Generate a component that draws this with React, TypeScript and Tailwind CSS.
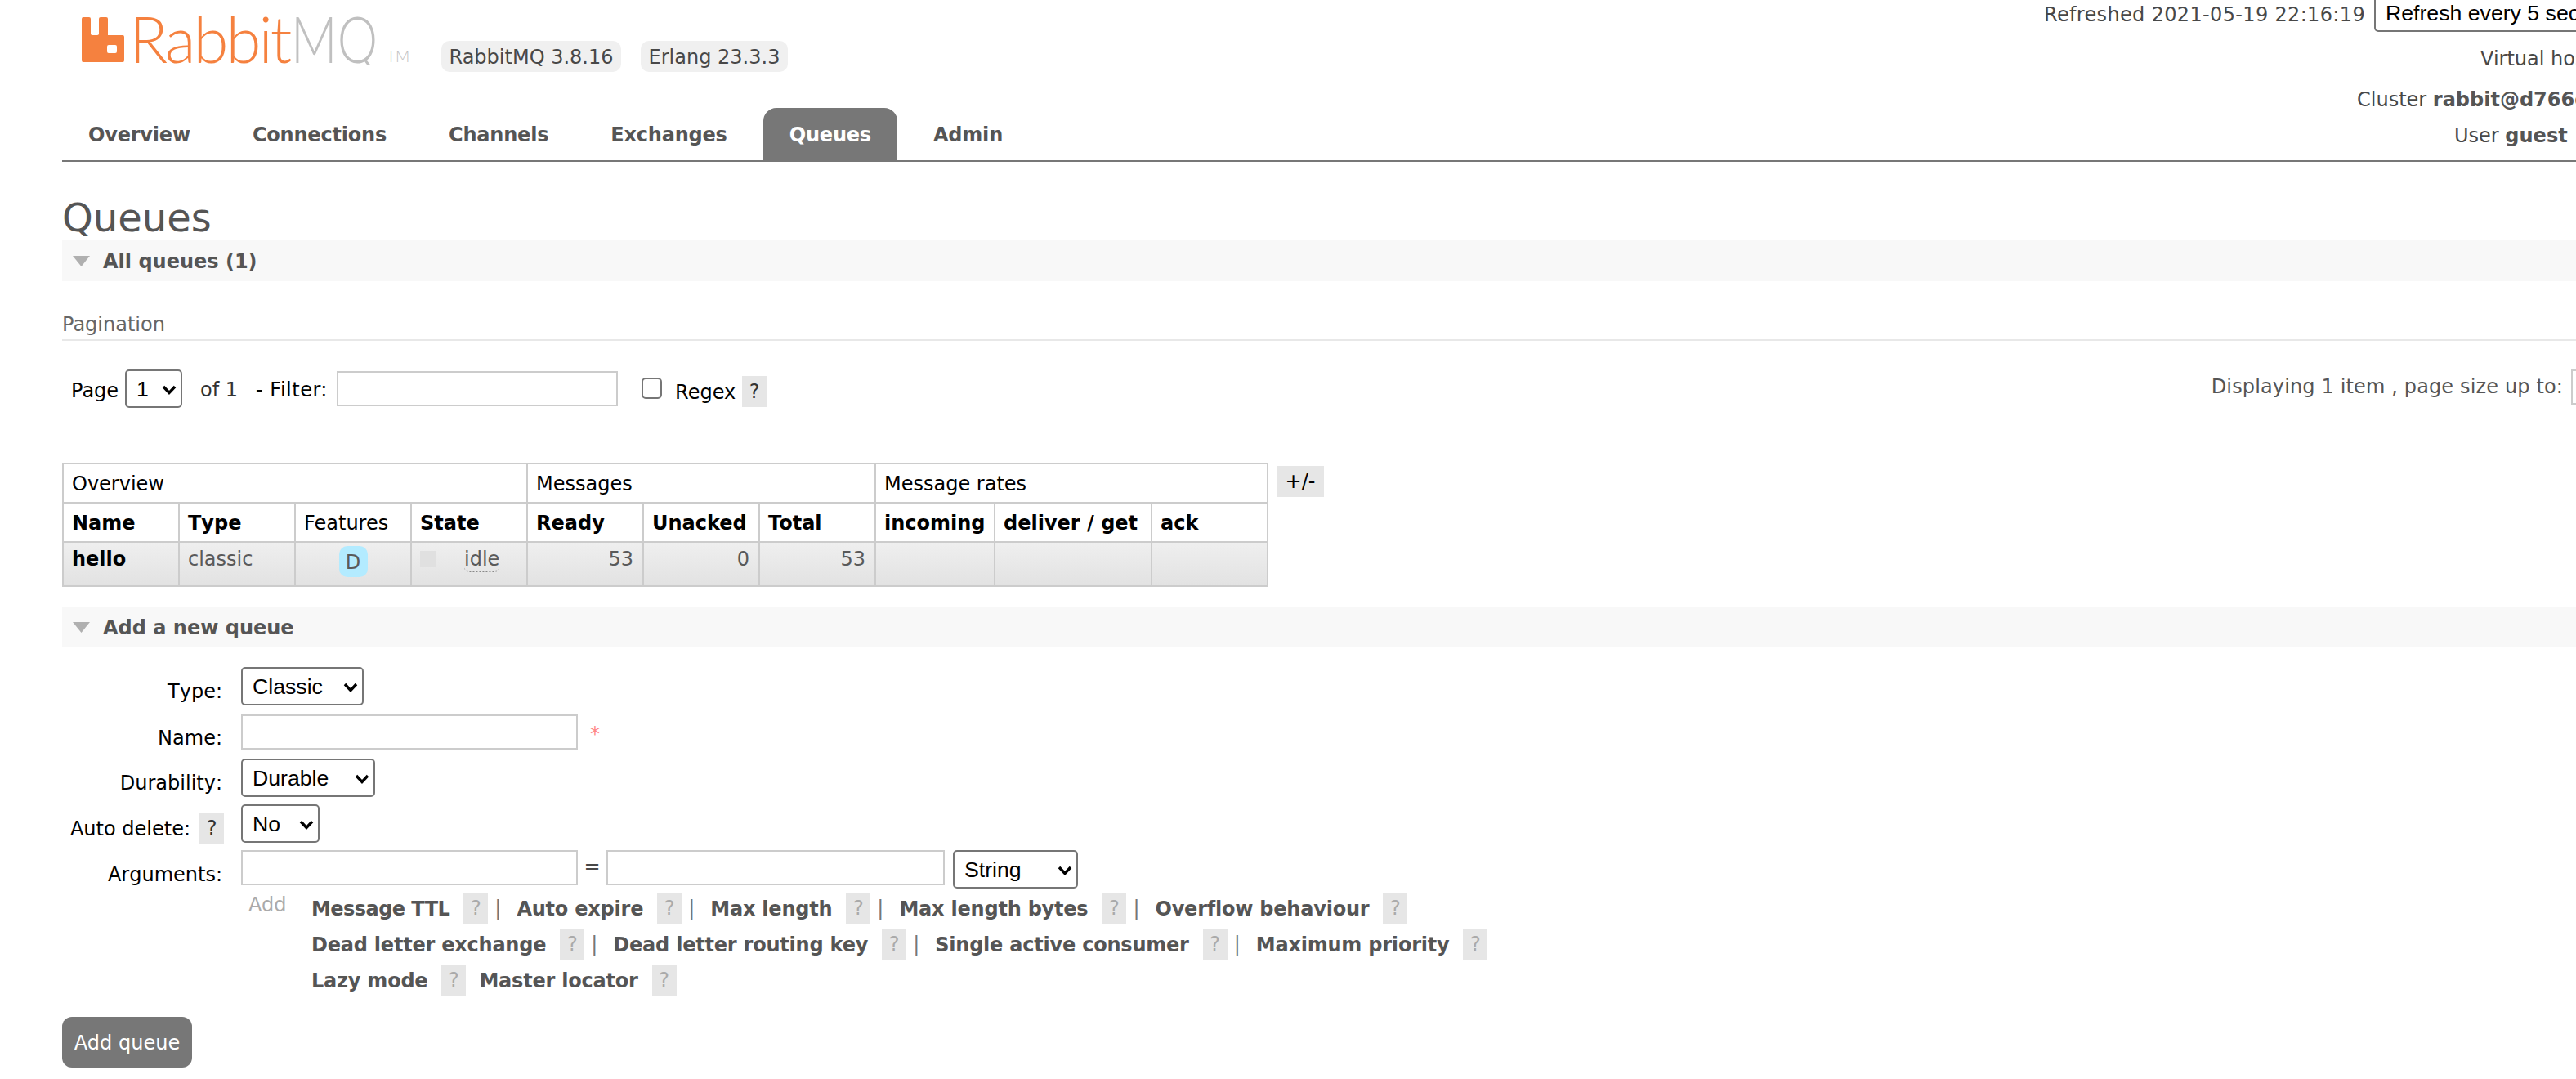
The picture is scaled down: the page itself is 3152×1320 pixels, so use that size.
import type { ReactNode } from "react";

const tabs = ["Overview", "Connections", "Channels", "Exchanges", "Queues", "Admin"];

const colWidths = [142, 142, 142, 142, 142, 142, 142, 146, 192, 142];

const argLines: { label: string; sep: boolean }[][] = [
  [
    { label: "Message TTL", sep: true },
    { label: "Auto expire", sep: true },
    { label: "Max length", sep: true },
    { label: "Max length bytes", sep: true },
    { label: "Overflow behaviour", sep: false },
  ],
  [
    { label: "Dead letter exchange", sep: true },
    { label: "Dead letter routing key", sep: true },
    { label: "Single active consumer", sep: true },
    { label: "Maximum priority", sep: false },
  ],
  [
    { label: "Lazy mode", sep: false },
    { label: "Master locator", sep: false },
  ],
];

function Select({ value, width, className = "" }: { value: string; width: number; className?: string }) {
  return (
    <div className={`relative shrink-0 ${className}`} style={{ width }}>
      <select
        defaultValue={value}
        className="h-[47px] w-full appearance-none rounded-[5px] border-2 border-[#767676] bg-white pt-[1px] pl-[12px] font-['Liberation_Sans',sans-serif] text-[26.67px] text-black"
      >
        <option>{value}</option>
      </select>
      <svg viewBox="0 0 18 12" className="pointer-events-none absolute top-[19px] right-[7px] h-[12px] w-[18px]">
        <polyline points="2,2 9,9.5 16,2" fill="none" stroke="#000" strokeWidth="3.4" />
      </svg>
    </div>
  );
}

function Help({ faint, className = "" }: { faint?: boolean; className?: string }) {
  return (
    <span
      className={`flex h-[38px] w-[30px] shrink-0 items-center justify-center bg-[#e6e6e6] ${
        faint ? "text-[#aaa]" : "text-[#333]"
      } ${className}`}
    >
      ?
    </span>
  );
}

function SectionBar({ children }: { children: ReactNode }) {
  return (
    <div className="flex h-[50px] items-center bg-[#f8f8f8] font-bold text-[#555]">
      <svg viewBox="0 0 21 13" className="ml-[13px] h-[13px] w-[21px]">
        <polygon points="0,0 21,0 10.5,13" fill="#b0b0b0" />
      </svg>
      <span className="ml-[16px] pt-[2px]">{children}</span>
    </div>
  );
}

function FormRow({ label, top = 16, help, className = "", children }: { label: string; top?: number; help?: boolean; className?: string; children: ReactNode }) {
  return (
    <div className={`flex items-start ${className}`}>
      <div className="flex w-[196px] shrink-0 items-start justify-end text-black">
        <span className="[font-kerning:none]" style={{ marginTop: top }}>{label}</span>
        {help && <Help className="mt-[10px] -mr-[2px] ml-[11px]" />}
      </div>
      <div className="ml-[23px] flex items-start">{children}</div>
    </div>
  );
}

function TextInput({ width }: { width: number }) {
  return <input className="h-[43px] shrink-0 border-2 border-[#ccc] bg-white" style={{ width }} />;
}

export default function App() {
  return (
    <div className="h-[1320px] w-[3152px] overflow-hidden bg-white">
      <div className="w-[3240px] pl-[76px] font-['DejaVu_Sans',sans-serif] text-[24px] leading-[28px] text-[#484848]">
        <header className="flex h-[198px] items-start justify-between border-b-2 border-[#777]">
          <div className="flex flex-col">
            <div className="ml-[24px] flex h-[111px] items-start pt-[21px]">
              <svg viewBox="0 0 52 55" className="h-[55px] w-[52px] shrink-0">
                <path
                  fillRule="evenodd"
                  fill="#f5813f"
                  d="M2 0h7a2 2 0 0 1 2 2v18a2 2 0 0 0 2 2h6a2 2 0 0 0 2-2V2a2 2 0 0 1 2-2h7a2 2 0 0 1 2 2v20h18a2 2 0 0 1 2 2v29a2 2 0 0 1-2 2H2a2 2 0 0 1-2-2V2a2 2 0 0 1 2-2zM33 34a2 2 0 0 0-2 2v6a2 2 0 0 0 2 2h8a2 2 0 0 0 2-2v-6a2 2 0 0 0-2-2z"
                />
              </svg>
              <div className="-mt-[4px] ml-[6px] flex h-[60px] w-[350px] items-end font-['Lato',sans-serif] text-[78px] leading-[60px] font-light whitespace-nowrap">
                <span className="w-[198px] tracking-[-3px] text-[#f5813f]">Rabbit</span>
                <span className="-mr-[33px] -mb-[2px] inline-block h-[62px] w-[140px] origin-left scale-x-[.8] overflow-hidden text-[#c0c0c0]">MQ</span>
                <span className="mb-[1px] ml-[10px] text-[19px] leading-[14px] text-[#c0c0c0]">TM</span>
              </div>
              <span className="mt-[29px] ml-[32px] flex h-[38px] w-[220px] items-center justify-center rounded-[10px] bg-[#f0f0f0] pt-[2px]">RabbitMQ 3.8.16</span>
              <span className="mt-[29px] ml-[24px] flex h-[38px] w-[180px] items-center justify-center rounded-[10px] bg-[#f0f0f0] pt-[2px]">Erlang 23.3.3</span>
            </div>
            <nav className="mt-[21px] flex gap-[12px]">
              {tabs.map((tab) => (
                <a
                  key={tab}
                  className={`flex h-[64px] items-center rounded-t-[16px] px-[32px] pt-[2px] font-bold tracking-[-0.2px] ${
                    tab === "Queues" ? "bg-[#777] text-white" : "text-[#555]"
                  }`}
                >
                  {tab}
                </a>
              ))}
            </nav>
          </div>
          <div className="-mt-[8px] flex flex-col items-end whitespace-nowrap">
            <div className="flex items-center">
              <span className="mt-[5px] tracking-[0.34px]">Refreshed 2021-05-19 22:16:19</span>
              <Select value="Refresh every 5 seconds" width={335} className="ml-[11px]" />
            </div>
            <div className="mt-[19px] flex w-[205px] items-center">
              <span>Virtual host</span>
              <span className="ml-[10px] font-bold">All</span>
            </div>
            <div className="mt-[22px] w-[356px]">
              Cluster <b className="text-[#555]">rabbit@d766c1f8a2b7</b>
            </div>
            <div className="mt-[12px] flex h-[36px] w-[237px] items-center">
              <span>
                User <b className="text-[#555]">guest</b>
              </span>
              <span className="ml-[10px] rounded-[5px] border-2 border-[#767676] px-[10px] text-black">Log out</span>
            </div>
          </div>
        </header>

        <h1 className="mt-[40px] text-[48px] leading-[56px] font-normal text-[#555]">Queues</h1>
        <SectionBar>All queues (1)</SectionBar>

        <h3 className="border-b-2 border-[#e8e8e8] pt-[39px] pb-[4px] text-[#666]">Pagination</h3>

        <div className="mt-[35px] flex h-[47px] items-start justify-between text-black">
          <div className="flex items-start">
            <span className="mt-[12px] ml-[11px] w-[66px]">Page</span>
            <Select value="1" width={70} />
            <span className="mt-[11px] ml-[22px] text-[#333]">of 1</span>
            <span className="mt-[11px] ml-[22px] w-[91px] tracking-[0.5px]">- Filter:</span>
            <input className="mt-[2px] ml-[8px] h-[43px] w-[344px] border-2 border-[#ccc] bg-white" />
            <input type="checkbox" className="mt-[10px] ml-[29px] h-[26px] w-[25px] appearance-none rounded-[5px] border-2 border-[#767676] bg-white" />
            <span className="mt-[14px] ml-[16px]">Regex</span>
            <Help className="mt-[8px] ml-[8px]" />
          </div>
          <div className="flex items-start text-[#555]">
            <span className="mt-[7px] tracking-[0.14px]">Displaying 1 item , page size up to:</span>
            <input defaultValue="" className="ml-[10px] h-[43px] w-[94px] border-2 border-[#ccc] bg-white" />
          </div>
        </div>

        <div className="mt-[67px] flex items-start">
          <table className="table-fixed border-2 border-[#ccc] text-left" style={{ width: 1474 }}>
            <colgroup>
              {colWidths.map((w, i) => (
                <col key={i} style={{ width: w }} />
              ))}
            </colgroup>
            <thead className="text-black">
              <tr className="h-[48px]">
                <th colSpan={4} className="border-2 border-[#ccc] px-[10px] pt-[2px] font-normal">Overview</th>
                <th colSpan={3} className="border-2 border-[#ccc] px-[10px] pt-[2px] font-normal">Messages</th>
                <th colSpan={3} className="border-2 border-[#ccc] px-[10px] pt-[2px] font-normal">Message rates</th>
              </tr>
              <tr className="h-[48px]">
                <th className="border-2 border-[#ccc] px-[10px] pt-[2px]">Name</th>
                <th className="border-2 border-[#ccc] px-[10px] pt-[2px] [font-kerning:none]">Type</th>
                <th className="border-2 border-[#ccc] px-[10px] pt-[2px] font-normal">Features</th>
                <th className="border-2 border-[#ccc] px-[10px] pt-[2px]">State</th>
                <th className="border-2 border-[#ccc] px-[10px] pt-[2px]">Ready</th>
                <th className="border-2 border-[#ccc] px-[10px] pt-[2px]">Unacked</th>
                <th className="border-2 border-[#ccc] px-[10px] pt-[2px]">Total</th>
                <th className="border-2 border-[#ccc] px-[10px] pt-[2px]">incoming</th>
                <th className="border-2 border-[#ccc] px-[10px] pt-[2px]">deliver / get</th>
                <th className="border-2 border-[#ccc] px-[10px] pt-[2px]">ack</th>
              </tr>
            </thead>
            <tbody>
              <tr className="h-[54px] bg-linear-to-b from-[#efefef] to-[#e2e2e2] text-[#5a5a5a]">
                <td className="border-2 border-[#ccc] px-[10px] pt-[6px] align-top font-bold text-black">hello</td>
                <td className="border-2 border-[#ccc] px-[10px] pt-[6px] align-top">classic</td>
                <td className="border-2 border-[#ccc] pt-[4px] align-top">
                  <span className="mx-auto flex h-[38px] w-[35px] items-center justify-center rounded-[10px] bg-[#b3ebff] pt-[2px]">D</span>
                </td>
                <td className="border-2 border-[#ccc] px-[10px] pt-[6px] align-top">
                  <div className="flex items-start">
                    <span className="mt-[4px] h-[20px] w-[20px] bg-[#e0e0e0]" />
                    <span className="ml-[34px] h-[30px] rounded-b-[6px] border-b-2 border-dotted border-[#888]">idle</span>
                  </div>
                </td>
                <td className="border-2 border-[#ccc] px-[11px] pt-[6px] text-right align-top">53</td>
                <td className="border-2 border-[#ccc] px-[11px] pt-[6px] text-right align-top">0</td>
                <td className="border-2 border-[#ccc] px-[11px] pt-[6px] text-right align-top">53</td>
                <td className="border-2 border-[#ccc]" />
                <td className="border-2 border-[#ccc]" />
                <td className="border-2 border-[#ccc]" />
              </tr>
            </tbody>
          </table>
          <span className="mt-[4px] ml-[10px] flex h-[38px] w-[58px] items-center justify-center bg-[#e6e6e6] text-black">+/-</span>
        </div>

        <div className="mt-[24px]">
          <SectionBar>Add a new queue</SectionBar>
        </div>

        <div className="mt-[24px]">
          <FormRow label="Type:">
            <Select value="Classic" width={150} />
          </FormRow>
          <FormRow label="Name:" top={15} className="mt-[11px]">
            <TextInput width={412} />
            <span className="mt-[10px] ml-[15px] text-[#f88]">*</span>
          </FormRow>
          <FormRow label="Durability:" className="mt-[11px]">
            <Select value="Durable" width={164} />
          </FormRow>
          <FormRow label="Auto delete:" help className="mt-[9px]">
            <Select value="No" width={96} />
          </FormRow>
          <FormRow label="Arguments:" className="mt-[8px]">
            <TextInput width={412} />
            <span className="mt-[6px] w-[35px] text-center">=</span>
            <TextInput width={414} />
            <Select value="String" width={153} className="ml-[10px]" />
          </FormRow>

          <div className="mt-[5px] ml-[228px] flex items-start">
            <span className="mt-[1px] w-[77px] text-[#aaa]">Add</span>
            <div className="flex flex-col gap-[6px]">
              {argLines.map((line, i) => (
                <div key={i} className="flex h-[38px] items-center font-bold whitespace-nowrap text-[#555]">
                  {line.map((item) => (
                    <div key={item.label} className="flex items-center">
                      <span className={`pt-[2px] ${item.label === "Message TTL" ? "tracking-[-0.55px]" : "tracking-[-0.22px]"}`}>{item.label}</span>
                      <Help faint className="ml-[17px] font-normal" />
                      {item.sep ? (
                        <span className="mr-[19px] ml-[8px] font-normal text-[#777]">|</span>
                      ) : (
                        <span className="w-[16px]" />
                      )}
                    </div>
                  ))}
                </div>
              ))}
            </div>
          </div>

          <button className="mt-[26px] h-[62px] w-[159px] rounded-[12px] bg-[#777] pt-[2px] text-white">Add queue</button>
        </div>
      </div>
    </div>
  );
}
